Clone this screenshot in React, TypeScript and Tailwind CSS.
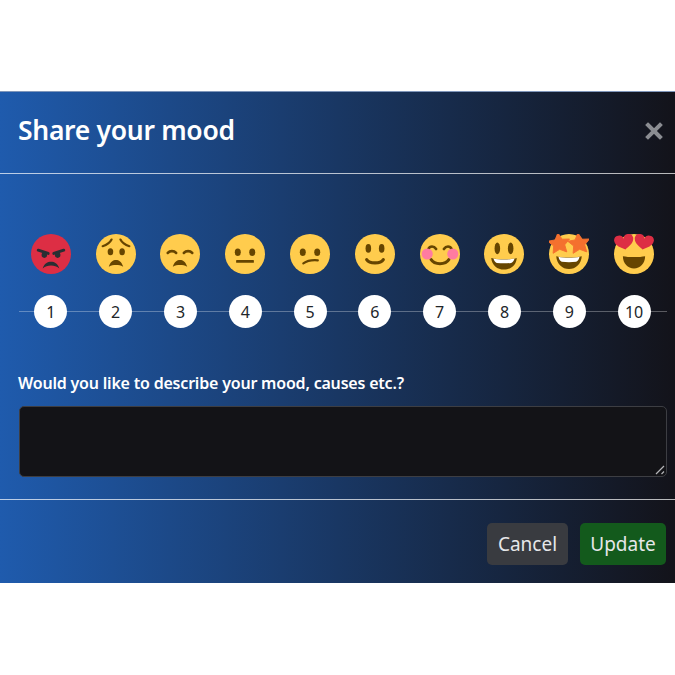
import React from 'react';

const INK = '#664500';

const Eyes = ({ l = 12, r = 24, y = 16, rx = 2.5, ry = 3.5 }: { l?: number; r?: number; y?: number; rx?: number; ry?: number }) => (
  <>
    <ellipse cx={l} cy={y} rx={rx} ry={ry} fill={INK} />
    <ellipse cx={r} cy={y} rx={rx} ry={ry} fill={INK} />
  </>
);

const Frown = () => <path d="M11.500 29.500C13 25 15.500 23.500 18 23.500S23 25 24.500 29.500C22 28.300 20.500 28 18 28S14 28.300 11.500 29.500Z" fill={INK} />;

const Star = ({ cx }: { cx: number }) => (
  <polygon
    transform={`translate(${cx} 8.500) rotate(-6)`}
    points="0,-9.500 3.200,-3.500 9.800,-3 5,1.800 6.200,8.300 0,5.300 -6.200,8.300 -5,1.800 -9.800,-3 -3.200,-3.500"
    fill="#F4702E"
    stroke="#F4702E"
    strokeWidth="0.800"
    strokeLinejoin="round"
  />
);

const Heart = ({ cx, tilt }: { cx: number; tilt: number }) => (
  <path
    transform={`translate(${cx} 6.500) rotate(${tilt})`}
    d="M0 7.500C-3.500 5-8.700 3-8.700-2A4.400 4.400 0 0 1 0-2.200A4.400 4.400 0 0 1 8.700-2C8.700 3 3.500 5 0 7.500Z"
    fill="#DD2E44"
  />
);

const emojis: React.ReactNode[] = [
  <>
    <circle cx="18" cy="18" r="18" fill="#DD2E44" />
    <path d="M6.500 14.500L15.500 17.500M29.500 14.500L20.500 17.500" stroke="#292F33" strokeWidth="2.600" strokeLinecap="round" fill="none" />
    <ellipse cx="12" cy="19" rx="2.500" ry="2.500" fill="#292F33" />
    <ellipse cx="24" cy="19" rx="2.500" ry="2.500" fill="#292F33" />
    <path d="M10.500 31C12 26.500 15 25 18 25S24 26.500 25.500 31C23 29 21 28.300 18 28.300S13 29 10.500 31Z" fill="#292F33" />
  </>,
  <>
    <circle cx="18" cy="18" r="18" fill="#FFCC4D" />
    <path d="M6 11C9 10 12.500 8 14 5M30 11C27 10 23.500 8 22 5" stroke={INK} strokeWidth="2" strokeLinecap="round" fill="none" />
    <Eyes l={13} r={23.500} y={16} rx={2.500} ry={3.200} />
    <Frown />
  </>,
  <>
    <circle cx="18" cy="18" r="18" fill="#FFCC4D" />
    <path d="M7 17C9 14.800 12.500 14.800 14.500 17M21.500 17C23.500 14.800 27 14.800 29 17" stroke={INK} strokeWidth="2.400" strokeLinecap="round" fill="none" />
    <Frown />
  </>,
  <>
    <circle cx="18" cy="18" r="18" fill="#FFCC4D" />
    <Eyes l={11.500} r={24.500} y={16.500} rx={2.700} ry={3.400} />
    <rect x="10" y="23.500" width="16" height="2.400" rx="0.500" fill={INK} />
  </>,
  <>
    <circle cx="18" cy="18" r="18" fill="#FFCC4D" />
    <Eyes l={11.500} r={24.500} y={16.500} rx={2.700} ry={3.400} />
    <path d="M12 26.500C15 24.300 19 23.200 25 23.700" stroke={INK} strokeWidth="2" strokeLinecap="round" fill="none" />
  </>,
  <>
    <circle cx="18" cy="18" r="18" fill="#FFCC4D" />
    <Eyes l={12} r={24} y={13} rx={2.500} ry={3.900} />
    <path d="M10.500 23C13 27 23 27 25.500 23" stroke={INK} strokeWidth="2.800" strokeLinecap="round" fill="none" />
  </>,
  <>
    <circle cx="18" cy="18" r="18" fill="#FFCC4D" />
    <path d="M7.500 13.500C9 10.500 12.500 10.500 14.500 13.500M21.500 13.500C23.500 10.500 27 10.500 28.500 13.500" stroke={INK} strokeWidth="2.400" strokeLinecap="round" fill="none" />
    <path d="M10 23C13 28 23 28 26 23" stroke={INK} strokeWidth="2.800" strokeLinecap="round" fill="none" />
    <circle cx="6.500" cy="18" r="5" fill="#FF7CA0" />
    <circle cx="29.500" cy="18" r="5" fill="#FF7CA0" />
  </>,
  <>
    <circle cx="18" cy="18" r="18" fill="#FFCC4D" />
    <Eyes l={12} r={24} y={13} rx={2.500} ry={5.300} />
    <path d="M6.500 21.500C11 23 25 23 29.500 21.500C29 28 24 32 18 32S7 28 6.500 21.500Z" fill={INK} />
    <path d="M8.500 22C13 23.300 23 23.300 27.500 22C27 24 26 25.500 24.500 26C20 26.500 16 26.500 11.500 26C10 25.500 9 24 8.500 22Z" fill="#fff" />
  </>,
  <>
    <circle cx="18" cy="18" r="18" fill="#FFCC4D" />
    <path d="M6.500 20C11 21.500 25 21.500 29.500 20C29 27 24 31.500 18 31.500S7 27 6.500 20Z" fill={INK} />
    <path d="M8.500 20.500C13 21.800 23 21.800 27.500 20.500C27 23 26 24.500 24.500 25C20 25.500 16 25.500 11.500 25C10 24.500 9 23 8.500 20.500Z" fill="#fff" />
    <Star cx={9} />
    <Star cx={27} />
  </>,
  <>
    <circle cx="18" cy="18" r="18" fill="#FFCC4D" />
    <path d="M8 20C13 21 23 21 28 20C28 26.500 23.500 31 18 31S8 26.500 8 20Z" fill={INK} />
    <Heart cx={9} tilt={-10} />
    <Heart cx={27} tilt={10} />
  </>,
];

export default function App() {
  return (
    <div className="min-h-[675px] bg-white pt-[91px] font-['Noto_Sans','Open_Sans',sans-serif]">
      <div className="h-[492px] border-t border-[#7f96ba] bg-[linear-gradient(to_right,#1f5bad,#13131a)] text-white">
        <div className="flex h-[82px] items-center justify-between border-b border-white/70 pl-[18px] pr-[10px] pb-[3px]">
          <h1 className="mb-[2px] text-[26.5px] font-semibold leading-none tracking-[-0.3px]">Share your mood</h1>
          <span className="text-[#8b8d92]">
            <svg width="22" height="22" viewBox="0 0 22 22">
              <path d="M5 5L17 17M17 5L5 17" stroke="currentColor" strokeWidth="4" strokeLinecap="square" />
            </svg>
          </span>
        </div>

        <div className="relative mt-[60px] ml-[18.500px] mr-[8.500px]">
          <div className="absolute inset-x-0 top-[77px] h-px bg-white/30" />
          <div className="relative grid grid-cols-10">
            {emojis.map((face, i) => (
              <div key={i} className="flex flex-col items-center">
                <svg width="40" height="40" viewBox="0 0 36 36">
                  {face}
                </svg>
                <div className="mt-[21px] flex h-[33px] w-[33px] items-center justify-center rounded-full bg-white pt-px text-[16px] text-[#212529]">
                  {i + 1}
                </div>
              </div>
            ))}
          </div>
        </div>

        <label className="mt-[44px] ml-[18px] block text-[16px] font-semibold leading-[22px] tracking-[-0.2px]">
          Would you like to describe your mood, causes etc.?
        </label>
        <div className="relative mt-[12px] ml-[19px] mr-[8px] flex h-[71px]">
          <textarea className="h-full w-full resize-none rounded-[5px] border border-[#3d3e43] bg-[#131317]" />
          <svg className="absolute right-[2px] bottom-[2px]" width="10" height="10" viewBox="0 0 10 10">
            <path d="M1 9L9 1M6.500 9L9 6.500" stroke="#b4b5b8" strokeWidth="1.200" fill="none" />
          </svg>
        </div>

        <div className="mt-[22px] flex justify-end gap-[12px] border-t border-white/70 pt-[23px] pr-[9px]">
          <button className="h-[42px] w-[81px] rounded-[5px] bg-[#393b40] text-[19px] text-[#e6e7e9]">Cancel</button>
          <button className="h-[42px] w-[86px] rounded-[5px] bg-[#135a1c] text-[19px] text-[#e6e7e9]">Update</button>
        </div>
      </div>
    </div>
  );
}
